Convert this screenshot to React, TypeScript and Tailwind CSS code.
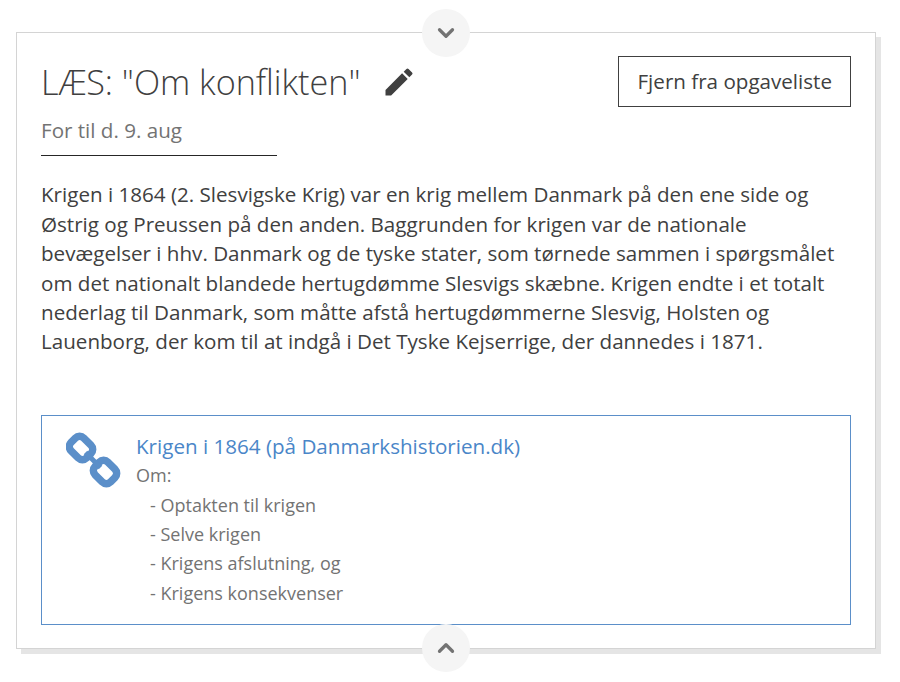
import React from "react";
import { ChevronDown, ChevronUp } from "lucide-react";
import { MdEdit } from "react-icons/md";

const ChainIcon = () => (
  <svg viewBox="0 0 56 56" className="w-14 h-14 shrink-0 text-[#5b8fc9]" fill="none" stroke="currentColor" strokeWidth="7.5">
    <rect x="4" y="7" width="22" height="18" rx="6" transform="rotate(45 15 16)" />
    <rect x="28" y="31" width="22" height="18" rx="6" transform="rotate(45 39 40)" />
    <path d="M19.5 20.5 L34.5 35.5" strokeWidth="5" />
  </svg>
);

const CircleButton = ({ up }: { up?: boolean }) => (
  <div
    className={`absolute left-1/2 -translate-x-1/2 w-12 h-12 rounded-full bg-neutral-100 flex items-center justify-center text-neutral-500 ${
      up ? "-bottom-6" : "-top-6"
    }`}
  >
    {up ? <ChevronUp size={26} strokeWidth={3} /> : <ChevronDown size={26} strokeWidth={3} />}
  </div>
);

export default function App() {
  return (
    <div className="w-[900px] h-[682px] bg-white pt-8 pl-4 font-['Open_Sans',sans-serif] text-neutral-700 text-[20.6px] leading-[29.4px]">
      <div className="relative w-[860px] border border-neutral-300 shadow-[5px_5px_0_#e5e5e5] bg-white px-6 py-5.75">
        <CircleButton />
        <div className="flex items-start justify-between">
          <div>
            <h1 className="mt-0.5 flex items-center gap-5 text-[34.2px] font-light leading-12">
              LÆS: "Om konflikten"
              <MdEdit size={36} />
            </h1>
            <div className="mt-2.5 w-59 border-b border-neutral-800 pb-2.5 text-neutral-500">For til d. 9. aug</div>
          </div>
          <button className="border border-neutral-700 px-4.5 py-2.5">Fjern fra opgaveliste</button>
        </div>

        <p className="mt-6">
          Krigen i 1864 (2. Slesvigske Krig) var en krig mellem Danmark på den ene side og Østrig og Preussen på den
          anden. Baggrunden for krigen var de nationale bevægelser i hhv. Danmark og de tyske stater, som tørnede sammen
          i spørgsmålet om det nationalt blandede hertugdømme Slesvigs skæbne. Krigen endte i et totalt nederlag til
          Danmark, som måtte afstå hertugdømmerne Slesvig, Holsten og Lauenborg, der kom til at indgå i Det Tyske
          Kejserrige, der dannedes i 1871.
        </p>

        <div className="mt-14.5 flex gap-3.5 border border-[#5b8fc9] px-6 py-4">
          <ChainIcon />
          <div className="text-lg leading-[29.4px] text-neutral-500">
            <a className="block text-[20.6px] text-[#4a86c8]">Krigen i 1864 (på Danmarkshistorien.dk)</a>
            <div>Om:</div>
            <ul className="pl-3.5">
              <li>- Optakten til krigen</li>
              <li>- Selve krigen</li>
              <li>- Krigens afslutning, og</li>
              <li>- Krigens konsekvenser</li>
            </ul>
          </div>
        </div>
        <CircleButton up />
      </div>
    </div>
  );
}
